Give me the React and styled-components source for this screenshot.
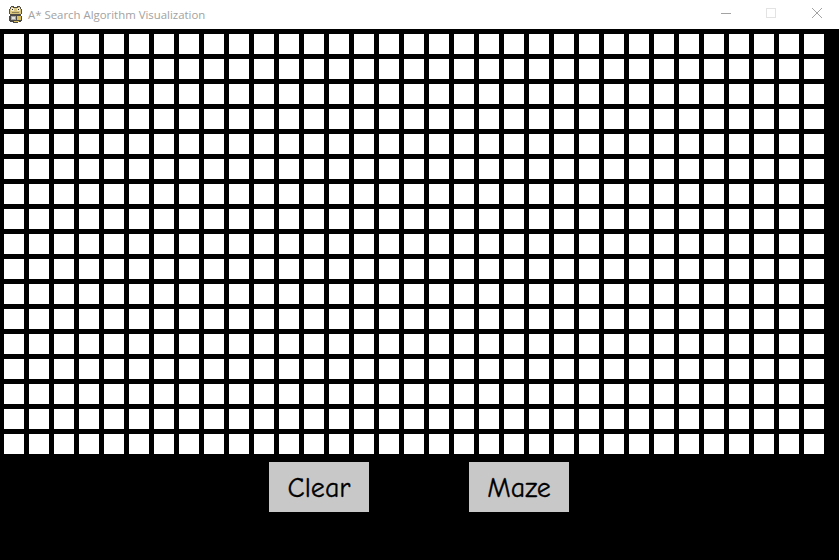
import { createGlobalStyle, styled } from "styled-components";

const ROWS = 17;
const COLS = 33;

export default function App() {
  const cells = Array.from({ length: ROWS * COLS }, (_, i) => i);
  return (
    <>
      <GlobalStyle />
      <Window>
        <TitleBar>
          <AppIcon />
          <Title>A* Search Algorithm Visualization</Title>
          <WindowControls>
            <ControlIcon $left={721} viewBox="0 0 10 10">
              <path d="M0 5.5H10" stroke="#a3a3a3" strokeWidth="1" />
            </ControlIcon>
            <ControlIcon $left={766} viewBox="0 0 10 10">
              <rect x="0.5" y="0.5" width="9" height="9" fill="none" stroke="#e3e3e3" />
            </ControlIcon>
            <ControlIcon $left={812} viewBox="0 0 10 10">
              <path d="M0 0L10 10M10 0L0 10" stroke="#a3a3a3" strokeWidth="1" />
            </ControlIcon>
          </WindowControls>
        </TitleBar>
        <Grid>
          {cells.map((i) => (
            <Cell key={i} />
          ))}
        </Grid>
        <ButtonRow>
          <GameButton>Clear</GameButton>
          <GameButton>Maze</GameButton>
        </ButtonRow>
      </Window>
    </>
  );
}

// little pygame snake, drawn pixel by pixel
function AppIcon() {
  return (
    <IconSvg viewBox="0 0 15 17" shapeRendering="crispEdges">
      <path d="M3 0h3v1h3V0h3v1h1v2h1v5h-1v1H2V8H1V3h1V1h1z" fill="#4f4d45" />
      <path d="M3 1h2v1h5V1h2v2h1v5H2V3h1z" fill="#d8c67e" />
      <path d="M3 2h3v3H3zM9 2h3v3H9z" fill="#efeadb" />
      <path d="M4 3h1v1H4zM10 3h1v1h-1z" fill="#26261f" />
      <path d="M4 6h7v1H4z" fill="#8d8155" />
      <path d="M2 9h11v1h1v5h-1v1h-3v1H5v-1H2v-1H1v-5h1z" fill="#4c4b47" />
      <path d="M3 10h5v4H3z" fill="#a9a9a6" />
      <path d="M4 11h3v2H4z" fill="#e2e2df" />
      <path d="M9 10h4v4H9zM6 15h5v1H6z" fill="#d9bf62" />
    </IconSvg>
  );
}

const GlobalStyle = createGlobalStyle`
  html, body {
    margin: 0;
    padding: 0;
    background: #000;
  }
`;

const Window = styled.div`
  width: 839px;
  height: 560px;
  background: #000;
  overflow: hidden;
`;

const TitleBar = styled.div`
  position: relative;
  display: flex;
  align-items: center;
  height: 29px;
  padding-left: 8px;
  background: #fff;
`;

const IconSvg = styled.svg`
  width: 15px;
  height: 17px;
  margin-right: 5px;
  margin-top: -1px;
  flex-shrink: 0;
`;

const Title = styled.span`
  font-family: "Open Sans", "Noto Sans", sans-serif;
  font-size: 11.4px;
  color: #a2a2a2;
  white-space: nowrap;
`;

const WindowControls = styled.div`
  position: absolute;
  inset: 0;
`;

const ControlIcon = styled.svg`
  position: absolute;
  top: 8px;
  left: ${(p) => p.$left}px;
  width: 10px;
  height: 10px;
`;

const Grid = styled.div`
  display: grid;
  grid-template-columns: repeat(${COLS}, 20px);
  grid-auto-rows: 20px;
  gap: 5px;
  padding: 5px 0 0 4px;
`;

const Cell = styled.div`
  background: #fff;
`;

const ButtonRow = styled.div`
  display: flex;
  gap: 100px;
  padding: 8px 0 0 269px;
`;

const GameButton = styled.button`
  width: 100px;
  height: 50px;
  padding: 2px 0 0;
  border: none;
  border-radius: 0;
  background: #c8c8c8;
  color: #000;
  font-family: "Comic Sans MS", "Comic Neue", cursive;
  font-size: 28px;
  -webkit-text-stroke: 0.3px #000;
`;
